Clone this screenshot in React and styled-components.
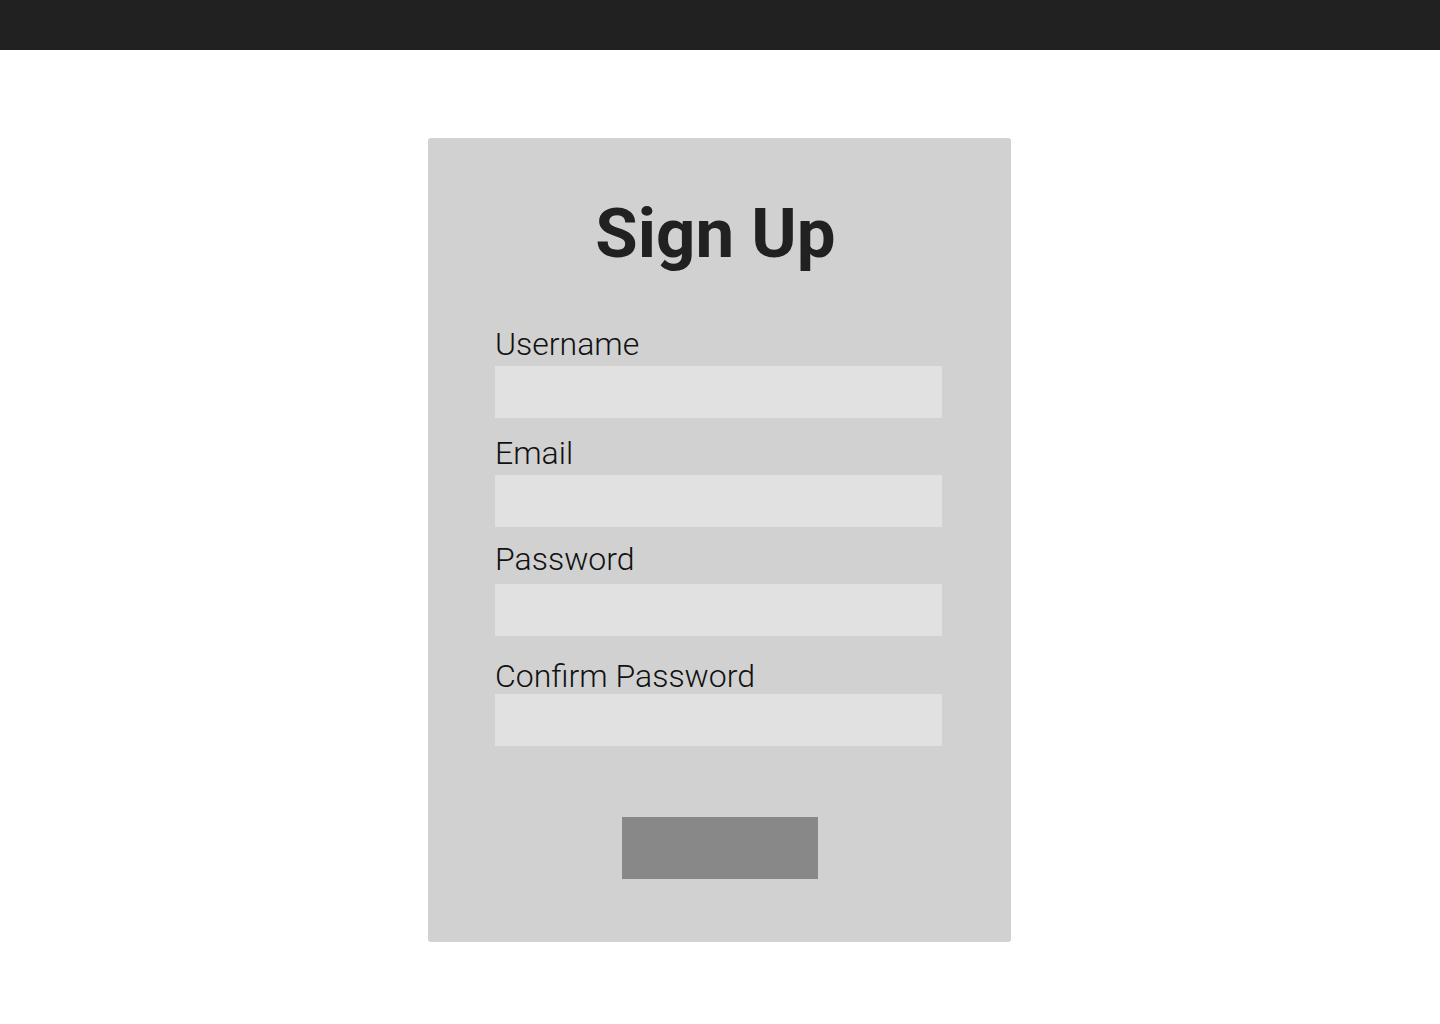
import React from 'react';
import styled, { createGlobalStyle } from 'styled-components';

const GlobalStyle = createGlobalStyle`
  * { box-sizing: border-box; }
  body {
    margin: 0;
    background: #ffffff;
    font-family: Roboto, "Liberation Sans", sans-serif;
  }
`;

const TopBar = styled.header`
  height: 50px;
  background: #212121;
`;

const Page = styled.main`
  display: flex;
  justify-content: center;
  padding: 88px 1px 80px 0;
`;

const Card = styled.form`
  width: 583px;
  height: 804px;
  background: #d1d1d1;
  border-radius: 3px;
  padding: 55px 69px 0 67px;
  display: flex;
  flex-direction: column;
`;

const Title = styled.h1`
  margin: 0 0 52px;
  font-size: 69px;
  font-weight: 700;
  line-height: 81px;
  color: #212121;
  text-align: center;
  padding-right: 6px;
`;

const Field = styled.div`
  display: flex;
  flex-direction: column;
  margin-top: ${({ top }) => top}px;
`;

const Label = styled.label`
  font-size: 32px;
  font-weight: 300;
  line-height: 37px;
  color: #111111;
  margin-bottom: ${({ gap }) => gap}px;
`;

const Input = styled.input`
  width: 447px;
  height: 52px;
  border: none;
  outline: none;
  background: #e1e1e1;
  font-family: inherit;
  font-size: 20px;
  padding: 0 12px;
`;

const Button = styled.button`
  align-self: center;
  width: 196px;
  height: 62px;
  margin-top: 71px;
  margin-left: 2px;
  border: none;
  background: #888888;
  cursor: pointer;
`;

const fields = [
  { id: 'username', label: 'Username', type: 'text', top: 0, gap: 3 },
  { id: 'email', label: 'Email', type: 'email', top: 17, gap: 3 },
  { id: 'password', label: 'Password', type: 'password', top: 14, gap: 6 },
  { id: 'confirm', label: 'Confirm Password', type: 'password', top: 22, gap: -1 },
];

const App = () => (
  <>
    <GlobalStyle />
    <TopBar />
    <Page>
      <Card onSubmit={(e) => e.preventDefault()}>
        <Title>Sign Up</Title>
        {fields.map((f) => (
          <Field key={f.id} top={f.top}>
            <Label htmlFor={f.id} gap={f.gap}>{f.label}</Label>
            <Input id={f.id} type={f.type} />
          </Field>
        ))}
        <Button type="submit" />
      </Card>
    </Page>
  </>
);

export default App;
